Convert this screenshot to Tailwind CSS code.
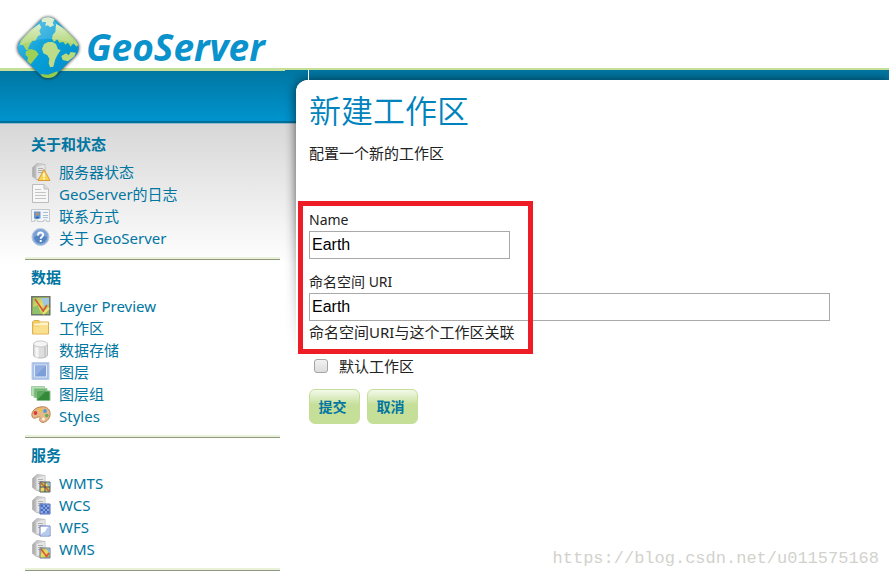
<!DOCTYPE html>
<html lang="zh-CN">
<head>
    <meta charset="UTF-8">
    <meta name="viewport" content="width=device-width, initial-scale=1.0">
    <title>GeoServer: 新建工作区</title>
    <script src="https://cdn.jsdelivr.net/npm/@tailwindcss/browser@4"></script>
</head>
<body class="relative min-h-screen overflow-x-hidden bg-white font-['Noto_Sans','Noto_Sans_CJK_SC',sans-serif] text-[15px] leading-[22px] text-[#222]">

    <!-- shared icon parts -->
    <svg class="absolute size-0" aria-hidden="true">
        <defs>
            <linearGradient id="gServer" x1="0" x2="1"><stop offset="0" stop-color="#a8a8a8"/><stop offset=".35" stop-color="#c6c6c6"/><stop offset="1" stop-color="#e4e4e4"/></linearGradient>
            <linearGradient id="gMap" x1="0" y1="0" x2="1" y2="1"><stop offset="0" stop-color="#8fbf6a"/><stop offset=".5" stop-color="#f0dc5c"/><stop offset="1" stop-color="#79b45a"/></linearGradient>
            <symbol id="server" viewBox="0 0 20 20">
                <path d="M1.500 5.500 6 1.500 14 2.500V14L10 18.500 5.500 17.500l-4-3z" fill="url(#gServer)" stroke="#b5b5b5" stroke-width=".8"/>
                <path d="M5.500 5 13.500 3v12l-8 2z" fill="#e6e6e6"/>
                <path d="M7 6.500h5M7 8.500h5M7 10.500h5" stroke="#b0b0b0"/>
            </symbol>
        </defs>
    </svg>

    <header class="relative z-10 flex h-[70px] items-start border-b-2 border-[#c5df98] pl-4 pt-3.5">
        <a href="#" class="flex items-start gap-1.5">
            <svg class="h-[66px] w-16 shrink-0 overflow-visible" viewBox="48 42 192 198" aria-hidden="true">
                <defs>
                    <linearGradient id="gSea" x1="0" y1="0" x2="1" y2="1"><stop offset="0" stop-color="#5fc3e6"/><stop offset=".5" stop-color="#079fd8"/><stop offset="1" stop-color="#0088c6"/></linearGradient>
                    <linearGradient id="gLand" x1="0" y1="0" x2="0" y2="1"><stop offset="0" stop-color="#d9ecc4"/><stop offset=".5" stop-color="#bcdc8a"/><stop offset="1" stop-color="#a4d05e"/></linearGradient>
                    <clipPath id="diamond"><rect x="70" y="68.500" width="149" height="149" rx="34" transform="rotate(45 144.5 143)"/></clipPath>
                    <filter id="soft" x="-20%" y="-20%" width="140%" height="140%"><feGaussianBlur stdDeviation="5"/></filter>
                </defs>
                <rect x="69" y="68" width="151" height="151" rx="34" transform="rotate(45 144.5 143.500)" fill="#222" opacity=".85" filter="url(#soft)"/>
                <g clip-path="url(#diamond)">
                    <path fill="url(#gSea)" d="M48 42h192v198H48z"/>
                    <path fill="url(#gLand)" d="M62 122 88 92 118 72 124 82 118 92 123 104 114 108 106 122 98 122 90 132 84 146 90 150 78 150 70 136 60 134z"/>
                    <path fill="#9fd056" d="M78 154 94 147 108 152 116 163 104 178 92 193 82 184 84 172 76 164z"/>
                    <path fill="#d6ebc2" d="M124 54 145 48 164 58 158 68 162 76 150 82 144 76 136 78 138 66 126 66z"/>
                    <path fill="url(#gLand)" d="M168 72 180 78 210 98 236 132 230 140 220 130 212 140 204 128 196 134 190 126 178 128 172 118 162 126 156 116 158 104 166 96z"/>
                    <path fill="#bcdc8a" d="M132 132 144 126 158 126 168 132 174 148 182 150 172 166 166 178 160 200 150 202 146 190 148 176 142 166 130 160 126 146z"/>
                    <path fill="#b8da7c" d="M184 168 198 160 206 166 212 156 228 158 222 170 204 184 188 180z"/>
                    <path fill="#96cb45" d="M122 222 144 224 172 214 174 230 130 240z"/>
                    <path fill="#fff" opacity=".15" d="M48 143 144 42 240 143Q144 90 48 143z"/>
                </g>
            </svg>
            <span class="pt-3 text-[37px] font-bold italic leading-[42px] text-[#0a92cc] font-['Open_Sans',sans-serif]">GeoServer</span>
        </a>
    </header>

    <div class="isolate flex bg-[linear-gradient(to_bottom,#0076a2_0,#0092cb_48px,#0092cb_51px,#006f9b_51px,#006f9b_53px,#4fa3c4_53px,#d8d8d8_54px,#d9d9d9_60px,#fff_195px)] bg-no-repeat">

        <aside class="w-[285px] shrink-0 border-t border-[#c5df98] pl-[25px] pr-[5px] pt-14 text-[#0076a1]">
            <section class="border-b border-[#8f9a80] pt-1.5 shadow-[inset_0_-2px_#e9f1d9] pb-2.5">
                <h2 class="mb-1.5 pl-1.5 font-bold">关于和状态</h2>
                <ul class="pl-1.5">
                    <li><a href="#" class="flex items-center gap-2">
                        <svg class="size-5" viewBox="0 0 20 20"><use href="#server"/><path d="M13 7.500 19 18.500H7z" fill="#f9d34c" stroke="#d99a35" stroke-linejoin="round"/><path d="M13 11v4M13 16v1.500" stroke="#fff" stroke-width="1.500"/></svg>
                        服务器状态</a></li>
                    <li><a href="#" class="flex items-center gap-2">
                        <svg class="size-5" viewBox="0 0 20 20"><path d="M1.500 .500H13l4.500 4.500v13.500h-16z" fill="#f7f7f7" stroke="#bdbdbd"/><path d="M13 .500V5h4.500" fill="#ddd" stroke="#bdbdbd"/><path d="M4 5.500h6M4 8.500h11M4 11.500h11M4 14.500h11" stroke="#c4c4c4"/></svg>
                        GeoServer的日志</a></li>
                    <li><a href="#" class="flex items-center gap-2">
                        <svg class="size-5" viewBox="0 0 20 20"><path d="M.500 3.500h18v12h-3V14h-3v1.500h-6V14h-3v1.500h-3z" fill="#f3f5f7" stroke="#c3c8cc"/><path d="M3 5.500h6.500v7H3z" fill="#5d97dc"/><circle cx="6.200" cy="8" r="1.800" fill="#c78d58"/><path d="M4 12.500q2-4 4.500 0z" fill="#255ca8"/><path d="M12 6.500h5M12 9.500h5M12 11.500h5" stroke="#a9bfd4"/></svg>
                        联系方式</a></li>
                    <li><a href="#" class="flex items-center gap-2">
                        <svg class="size-5" viewBox="0 0 20 20"><circle cx="9.500" cy="9" r="8.500" fill="#86a9d8" stroke="#b4c8e3"/><circle cx="9.500" cy="9" r="6.500" fill="#5583c2"/><path d="M3 9a6.500 6.500 0 0 1 13 0Q9.500 5.500 3 9" fill="#7ea3d6"/><path d="M7 7.500c0-4 5.200-3.600 5.200-.7 0 1.900-2.500 1.900-2.500 4M9.700 12v2" fill="none" stroke="#fff" stroke-width="1.900"/></svg>
                        关于 GeoServer</a></li>
                </ul>
            </section>

            <section class="border-b border-[#8f9a80] pt-1.5 shadow-[inset_0_-2px_#e9f1d9] pb-2.5">
                <h2 class="mb-[7px] pl-1.5 font-bold">数据</h2>
                <ul class="pl-1.5">
                    <li><a href="#" class="flex items-center gap-2">
                        <svg class="size-5" viewBox="0 0 20 20"><path d="M.800 .800h18v18h-18z" fill="url(#gMap)" stroke="#6d7468" stroke-width="1.500"/><path d="M10 2h8v6l-5 3z" fill="#9fc9e0"/><path d="M2 11l5-2 3 9H2z" fill="#8cc46b"/><path d="m4 3 9 13M16 9l-4 6" stroke="#d8503f" stroke-width="1.500"/><path d="M12 18l6-6" stroke="#f3e37a" stroke-width="2"/></svg>
                        Layer Preview</a></li>
                    <li><a href="#" class="flex items-center gap-2">
                        <svg class="size-5" viewBox="0 0 20 20"><path d="M1.500 4 3 2.500h5L9.500 4h8v12h-16z" fill="#f1ca69" stroke="#e0b04e"/><path d="M3 5.500h5L9.500 4.500H17v3H3z" fill="#fff3c7"/><path d="M2.500 8.500h6L10 7h7v8.500H2.500z" fill="#fadf8f"/></svg>
                        工作区</a></li>
                    <li><a href="#" class="flex items-center gap-2">
                        <svg class="size-5" viewBox="0 0 20 20"><path d="M2.500 4v11c0 4 14 4 14 0V4z" fill="#dedede" stroke="#bcbcbc"/><path d="M6 6.500v11" stroke="#f7f7f7" stroke-width="3"/><path d="M14 6.500v10" stroke="#cacaca" stroke-width="2"/><ellipse cx="9.500" cy="4" rx="7" ry="3" fill="#f5f5f5" stroke="#c8c8c8"/></svg>
                        数据存储</a></li>
                    <li><a href="#" class="flex items-center gap-2">
                        <svg class="size-5" viewBox="0 0 20 20"><path d="M1 .500h17v17H1z" fill="#a9c0e6" stroke="#b9cbe9"/><path d="M3.500 3h12v12h-12z" fill="#7d9fd9" stroke="#e1eafa"/><path d="m4 14.500 11-11H4z" fill="#92afe0"/></svg>
                        图层</a></li>
                    <li><a href="#" class="flex items-center gap-2">
                        <svg class="size-5" viewBox="0 0 20 20"><path d="M.500 2.500h13v9H.500z" fill="#b9dfb9" stroke="#a4cfa4"/><path d="M3 4.500h13v9H3z" fill="#72b772" stroke="#9ccc9c"/><path d="M6 7h13v9.500H6z" fill="#338a38" stroke="#8cbf8e"/><path d="m6.500 15.500 8-8h-8z" fill="#5aa65c"/></svg>
                        图层组</a></li>
                    <li><a href="#" class="flex items-center gap-2">
                        <svg class="size-5" viewBox="0 0 20 20"><path d="M9 1C16-.500 20 4 19 9.500S12 18 9.500 15.500s1-3.500-1-4.500-3 2-6 1S0 2.500 9 1z" fill="#e5b88a" stroke="#bd7e4b"/><circle cx="4.500" cy="7" r="1.900" fill="#d93d35"/><circle cx="9" cy="4" r="1.800" fill="#efc03e"/><circle cx="14" cy="5" r="1.900" fill="#4f9bd2"/><circle cx="15.800" cy="9.500" r="1.800" fill="#62ae54"/><circle cx="12.500" cy="13" r="1.500" fill="#fff3e3"/></svg>
                        Styles</a></li>
                </ul>
            </section>

            <section class="border-b border-[#8f9a80] pt-1.5 shadow-[inset_0_-2px_#e9f1d9] pb-2.5">
                <h2 class="mb-1.5 pl-1.5 font-bold">服务</h2>
                <ul class="pl-1.5">
                    <li><a href="#" class="flex items-center gap-2">
                        <svg class="size-5" viewBox="0 0 20 20"><use href="#server"/><path d="M9 9h10v10H9z" fill="url(#gMap)" stroke="#555a66"/><path d="m10 10 8 8" stroke="#e0523c" stroke-width="1.500"/><path d="M15 10h4v4z" fill="#83b6e4"/><path d="M14 9v10M9 14h10" stroke="#4b4f5c"/></svg>
                        WMTS</a></li>
                    <li><a href="#" class="flex items-center gap-2">
                        <svg class="size-5" viewBox="0 0 20 20"><use href="#server"/><path d="M9 9h10v10H9z" fill="#89a7e3" stroke="#5269b5"/><path d="M10 10h2v2h-2zM14 10h2v2h-2zM12 12h2v2h-2zM16 12h2v2h-2zM10 14h2v2h-2zM14 14h2v2h-2zM12 16h2v2h-2zM16 16h2v2h-2z" fill="#4a6cc0"/></svg>
                        WCS</a></li>
                    <li><a href="#" class="flex items-center gap-2">
                        <svg class="size-5" viewBox="0 0 20 20"><use href="#server"/><path d="M9 9h10v10H9z" fill="#fff" stroke="#6279bd"/><path d="M10 18c0-3 4-2 5-5 .5-2 2-3 3.500-3.500V18z" fill="#b4cbee"/></svg>
                        WFS</a></li>
                    <li><a href="#" class="flex items-center gap-2">
                        <svg class="size-5" viewBox="0 0 20 20"><use href="#server"/><path d="M9 9h10v10H9z" fill="url(#gMap)" stroke="#6b7a9c"/><path d="M15 10h4v4z" fill="#83b6e4"/><path d="m10 10 6 8M18 14l-3 4" stroke="#e0523c" stroke-width="1.500"/></svg>
                        WMS</a></li>
                </ul>
            </section>
        </aside>

        <main class="relative ml-[11px] mt-2.5 min-w-0 flex-1 rounded-tl-xl bg-white px-[13px] pt-2.5">
            <!-- panel shadow, fades out down the left edge -->
            <div class="absolute -left-3 -top-2.5 right-0 -z-10 h-[285px] overflow-hidden pl-3 pt-2.5 mask-[linear-gradient(#000_45%,transparent)]">
                <div class="h-[320px] rounded-tl-xl bg-white shadow-[0_0_11px_rgba(0,0,0,0.65)]"></div>
            </div>
            <div class="absolute -top-2.5 left-3 h-2.5 w-px bg-white"></div>

            <h1 class="text-[32px] font-[350] leading-[42px] text-[#0083bd] font-['Noto_Sans','Noto_Sans_CJK_SC_DemiLight','Noto_Sans_CJK_SC',sans-serif]">新建工作区</h1>
            <p class="mt-2.5">配置一个新的工作区</p>

            <form class="pt-9">
                <div class="relative pb-3 pt-[9px]">
                    <label for="name" class="block text-sm leading-[22px]">Name</label>
                    <input id="name" type="text" value="Earth" class="block h-7 w-[201px] border border-[#a9a9a9] bg-white px-0.5 font-['Liberation_Sans',sans-serif] text-base text-black">
                    <label for="uri" class="mt-3 block text-sm leading-[22px]">命名空间 URI</label>
                    <input id="uri" type="text" value="Earth" aria-describedby="uriHint" class="block h-7 w-full max-w-[521px] border border-[#a9a9a9] bg-white px-0.5 font-['Liberation_Sans',sans-serif] text-base text-black">
                    <p id="uriHint">命名空间URI与这个工作区关联</p>
                    <!-- highlight frame -->
                    <div class="pointer-events-none absolute -left-[11px] top-px h-[153px] w-[235px] border-5 border-[#ee1c25]"></div>
                </div>

                <div class="flex items-center gap-[11px] pl-[5px]">
                    <input id="isDefault" type="checkbox" class="size-3.5 appearance-none rounded-[3px] border border-[#a5a5a5] bg-linear-to-b from-[#f2f2f2] to-[#dcdcdc]">
                    <label for="isDefault">默认工作区</label>
                </div>

                <div class="mt-3 flex gap-[7px] text-sm font-bold text-[#0076a1]">
                    <button type="submit" class="h-[35px] w-[51px] rounded-md border border-[#c5df98] bg-linear-to-b from-[#f4f9ea] to-[#c5df98] to-45% pr-1">提交</button>
                    <button type="button" class="h-[35px] w-[51px] rounded-md border border-[#c5df98] bg-linear-to-b from-[#f4f9ea] to-[#c5df98] to-45% pr-1">取消</button>
                </div>
            </form>
        </main>
    </div>

    <div class="absolute bottom-2 right-2.5 font-['Liberation_Mono',monospace] text-[17px] leading-6 text-[#d2d2cd]">https://blog.csdn.net/u011575168</div>
</body>
</html>
